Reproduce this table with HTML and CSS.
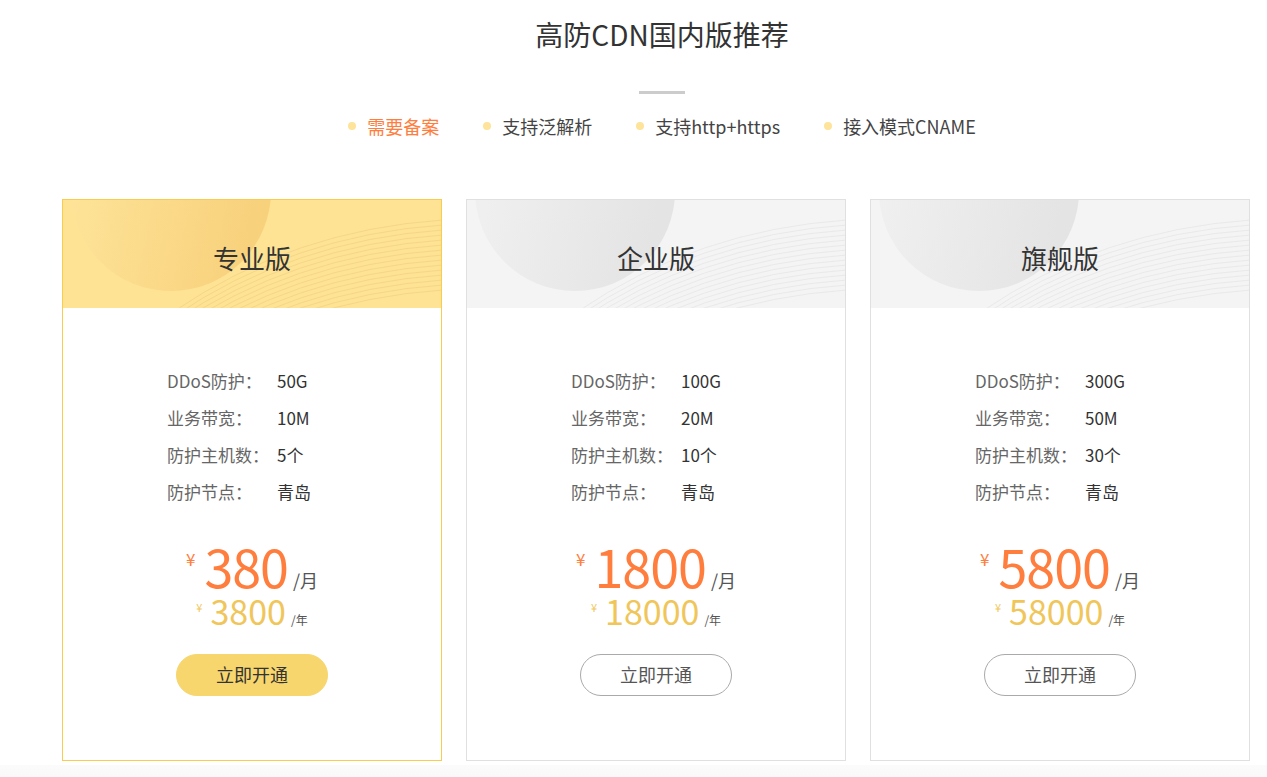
FILE: index.html
```html
<!DOCTYPE html>
<html lang="zh-CN">

<head>
    <meta charset="UTF-8">
    <meta name="viewport" content="width=device-width, initial-scale=1.0">
    <title>高防CDN国内版推荐</title>
    <link rel="stylesheet" href="styles.css">
</head>

<body>
    <div class="wrap">
        <h2 class="title">高防CDN国内版推荐</h2>
        <div class="line"></div>
        <ul class="feature">
            <li class="on"><i class="dot"></i>需要备案</li>
            <li><i class="dot"></i>支持泛解析</li>
            <li><i class="dot"></i>支持http+https</li>
            <li><i class="dot"></i>接入模式CNAME</li>
        </ul>

        <div class="cards">
            <div class="card card-hot">
                <div class="card-hd">
                    <svg class="deco" viewBox="0 0 378 108" preserveAspectRatio="none">
                        <defs>
                            <linearGradient id="g1" x1="0" y1="0" x2="1" y2="0.2">
                                <stop offset="0" stop-color="#fee59b" />
                                <stop offset="1" stop-color="#f8d17c" />
                            </linearGradient>
                            <path id="ln1" d="M110 112 Q 230 30 380 20" fill="none" />
                        </defs>
                        <circle cx="108" cy="-9" r="100" fill="url(#g1)" />
                        <g class="lines lines-y">
                            <use href="#ln1" />
                            <use href="#ln1" y="5" />
                            <use href="#ln1" y="10" />
                            <use href="#ln1" y="15" />
                            <use href="#ln1" y="20" />
                            <use href="#ln1" y="25" />
                            <use href="#ln1" y="30" />
                            <use href="#ln1" y="35" />
                            <use href="#ln1" y="40" />
                            <use href="#ln1" y="45" />
                            <use href="#ln1" y="50" />
                            <use href="#ln1" y="55" />
                            <use href="#ln1" y="60" />
                            <use href="#ln1" y="65" />
                            <use href="#ln1" y="70" />
                        </g>
                    </svg>
                    <h3>专业版</h3>
                </div>
                <ul class="spec">
                    <li><span>DDoS防护：</span><b>50G</b></li>
                    <li><span>业务带宽：</span><b>10M</b></li>
                    <li><span>防护主机数：</span><b>5个</b></li>
                    <li><span>防护节点：</span><b>青岛</b></li>
                </ul>
                <p class="price"><i>¥</i><em>380</em><small>/月</small></p>
                <p class="price-year"><i>¥</i><em>3800</em><small>/年</small></p>
                <a class="btn btn-hot" href="#">立即开通</a>
            </div>

            <div class="card">
                <div class="card-hd">
                    <svg class="deco" viewBox="0 0 378 108" preserveAspectRatio="none">
                        <defs>
                            <linearGradient id="g2" x1="0" y1="0" x2="1" y2="0.2">
                                <stop offset="0" stop-color="#f1f1f1" />
                                <stop offset="1" stop-color="#e4e4e4" />
                            </linearGradient>
                            <path id="ln2" d="M110 112 Q 230 30 380 20" fill="none" />
                        </defs>
                        <circle cx="108" cy="-9" r="100" fill="url(#g2)" />
                        <g class="lines lines-g">
                            <use href="#ln2" />
                            <use href="#ln2" y="5" />
                            <use href="#ln2" y="10" />
                            <use href="#ln2" y="15" />
                            <use href="#ln2" y="20" />
                            <use href="#ln2" y="25" />
                            <use href="#ln2" y="30" />
                            <use href="#ln2" y="35" />
                            <use href="#ln2" y="40" />
                            <use href="#ln2" y="45" />
                            <use href="#ln2" y="50" />
                            <use href="#ln2" y="55" />
                            <use href="#ln2" y="60" />
                            <use href="#ln2" y="65" />
                            <use href="#ln2" y="70" />
                        </g>
                    </svg>
                    <h3>企业版</h3>
                </div>
                <ul class="spec">
                    <li><span>DDoS防护：</span><b>100G</b></li>
                    <li><span>业务带宽：</span><b>20M</b></li>
                    <li><span>防护主机数：</span><b>10个</b></li>
                    <li><span>防护节点：</span><b>青岛</b></li>
                </ul>
                <p class="price"><i>¥</i><em>1800</em><small>/月</small></p>
                <p class="price-year"><i>¥</i><em>18000</em><small>/年</small></p>
                <a class="btn" href="#">立即开通</a>
            </div>

            <div class="card">
                <div class="card-hd">
                    <svg class="deco" viewBox="0 0 378 108" preserveAspectRatio="none">
                        <circle cx="108" cy="-9" r="100" fill="url(#g2)" />
                        <g class="lines lines-g">
                            <use href="#ln2" />
                            <use href="#ln2" y="5" />
                            <use href="#ln2" y="10" />
                            <use href="#ln2" y="15" />
                            <use href="#ln2" y="20" />
                            <use href="#ln2" y="25" />
                            <use href="#ln2" y="30" />
                            <use href="#ln2" y="35" />
                            <use href="#ln2" y="40" />
                            <use href="#ln2" y="45" />
                            <use href="#ln2" y="50" />
                            <use href="#ln2" y="55" />
                            <use href="#ln2" y="60" />
                            <use href="#ln2" y="65" />
                            <use href="#ln2" y="70" />
                        </g>
                    </svg>
                    <h3>旗舰版</h3>
                </div>
                <ul class="spec">
                    <li><span>DDoS防护：</span><b>300G</b></li>
                    <li><span>业务带宽：</span><b>50M</b></li>
                    <li><span>防护主机数：</span><b>30个</b></li>
                    <li><span>防护节点：</span><b>青岛</b></li>
                </ul>
                <p class="price"><i>¥</i><em>5800</em><small>/月</small></p>
                <p class="price-year"><i>¥</i><em>58000</em><small>/年</small></p>
                <a class="btn" href="#">立即开通</a>
            </div>
        </div>
    </div>
    <div class="band"></div>
</body>

</html>
```

FILE: styles.css
```css
* {
    padding: 0;
    margin: 0;
    box-sizing: border-box;
}

body {
    background-color: #fff;
    font-family: "Noto Sans CJK SC", "Noto Sans", sans-serif;
    color: #333;
}

ul {
    list-style: none;
}

i,
em,
b {
    font-style: normal;
    font-weight: normal;
}

.wrap {
    width: 1200px;
    margin-left: 62px;
    padding-top: 14px;
}

.title {
    font-size: 28px;
    font-weight: normal;
    line-height: 40px;
    text-align: center;
    color: #333;
}

.line {
    width: 46px;
    height: 3px;
    background-color: #ccc;
    margin: 37px auto 0;
}

.feature {
    display: flex;
    justify-content: center;
    gap: 44px;
    margin-top: 19px;
    font-size: 18px;
    line-height: 26px;
    color: #444;
}

.feature li {
    display: flex;
    align-items: center;
}

.feature .dot {
    width: 8px;
    height: 8px;
    border-radius: 50%;
    background-color: #fde49a;
    margin-right: 11px;
}

.feature .on {
    color: #ff7e3e;
}

.cards {
    display: flex;
    gap: 24px;
    margin-top: 60px;
}

.card {
    width: 380px;
    height: 562px;
    border: 1px solid #e0e0e0;
    background-color: #fff;
    text-align: center;
}

.card-hot {
    border-color: #f9cb4f;
}

.card-hd {
    height: 108px;
    position: relative;
    overflow: hidden;
    background-color: #f4f4f4;
    display: flex;
    align-items: center;
    justify-content: center;
    padding-top: 6px;
}

.card-hot .card-hd {
    background-color: #fee395;
}

.card-hd .deco {
    position: absolute;
    left: 0;
    top: 0;
    width: 100%;
    height: 100%;
}

.lines {
    stroke-width: 0.8;
}

.lines-y {
    stroke: #f4d283;
}

.lines-g {
    stroke: #e6e6e6;
}

.card-hd h3 {
    position: relative;
    font-size: 26px;
    font-weight: normal;
    color: #333;
}

.spec {
    width: 170px;
    margin: 54px auto 0;
    text-align: left;
    font-size: 17px;
    line-height: 37px;
}

.spec li {
    display: flex;
}

.spec span {
    width: 110px;
    color: #666;
}

.spec b {
    color: #333;
}

.price,
.price-year {
    display: flex;
    justify-content: center;
    align-items: baseline;
    line-height: 1;
    white-space: nowrap;
}

.price {
    margin-top: 30px;
}

.price i {
    align-self: flex-start;
    margin-top: 10px;
    margin-right: 9px;
    font-size: 17px;
    color: #ff7e3e;
}

.price em {
    font-size: 52px;
    color: #ff7e3e;
    letter-spacing: -1px;
}

.price small {
    font-size: 18px;
    color: #555;
    margin-left: 5px;
}

.price-year {
    margin-top: 2px;
}

.price-year i {
    align-self: flex-start;
    margin-top: 8px;
    margin-right: 8px;
    font-size: 11px;
    color: #f0c65a;
}

.price-year em {
    font-size: 34px;
    color: #f0c65a;
}

.price-year small {
    font-size: 12px;
    color: #555;
    margin-left: 5px;
}

.btn {
    display: block;
    width: 152px;
    height: 42px;
    line-height: 38px;
    margin: 26px auto 0;
    border: 1px solid #aaa;
    border-radius: 21px;
    font-size: 18px;
    color: #555;
    text-decoration: none;
}

.btn-hot {
    border-color: #f7d66e;
    background-color: #f7d66e;
    color: #333;
}

.band {
    height: 20px;
    margin-top: 4px;
    background: linear-gradient(180deg, #fbfbfb, #f8f8f8);
}
```
